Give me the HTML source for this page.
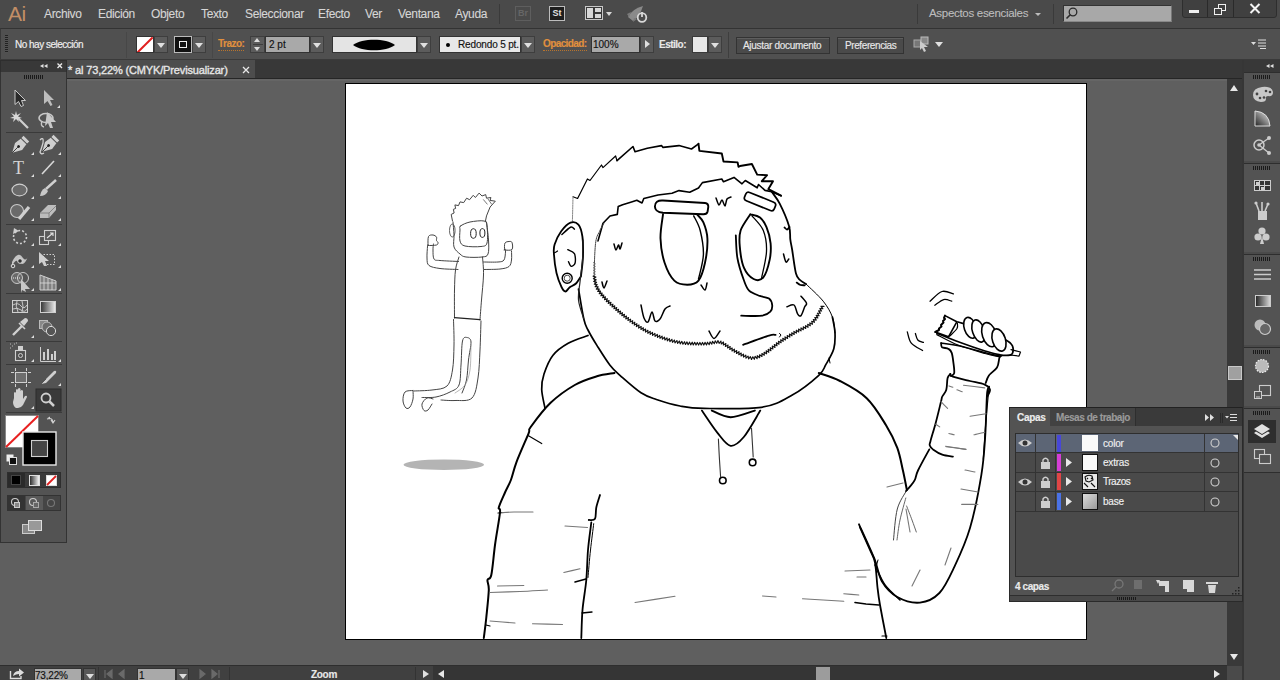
<!DOCTYPE html>
<html><head><meta charset="utf-8">
<style>
*{margin:0;padding:0;box-sizing:border-box}
html,body{width:1280px;height:680px;overflow:hidden;background:#5f5f5f;font-family:"Liberation Sans",sans-serif;position:relative}
.a{position:absolute}
svg{overflow:visible}
#menubar{left:0;top:0;width:1280px;height:28px;background:#4a4a4a}
.mi{position:absolute;top:7px;font-size:12px;letter-spacing:-0.35px;color:#d6d6d6;white-space:nowrap;-webkit-text-stroke:0.1px currentColor}
#ctrl{left:0;top:28px;width:1280px;height:32px;background:#505050;border-top:1px solid #333;border-bottom:1px solid #3a3a3a;border-left:1px solid #3a3a3a}
.lbl{position:absolute;font-size:10px;color:#e8e8e8;white-space:nowrap;-webkit-text-stroke:0.15px currentColor}
.or{color:#e0903e;border-bottom:1px dotted #b8742e;line-height:12px}
.fld{position:absolute;border:1px solid #333}
.dd{position:absolute;background:#5c5c5c;border:1px solid #3e3e3e}
.dd:after{content:"";position:absolute;left:50%;top:50%;margin-left:-4px;margin-top:-2px;border-left:4px solid transparent;border-right:4px solid transparent;border-top:5px solid #e0e0e0}
#tabbar{left:67px;top:60px;width:1177px;height:19px;background:#383838}
#tab{left:67px;top:60px;width:188px;height:19px;background:#4d4d4d}
#vscroll{left:1227px;top:79px;width:15px;height:587px;background:#393939}
#dock{left:1242px;top:60px;width:38px;height:620px;background:#4a4a4a;border-left:2px solid #363636}
#status{left:0;top:665px;width:1227px;height:15px;background:#404040;border-top:1px solid #2e2e2e}
#artboard{left:345px;top:83px;width:742px;height:557px;background:#fff;border:1px solid #000}
#tools{left:0;top:60px;width:67px;height:483px;background:#535353;border:1px solid #333}
#layers{left:1009px;top:407px;width:234px;height:195px;background:#535353;border:1px solid #2c2c2c}
</style></head><body>
<div id="menubar" class="a">
  <div class="a" style="left:8px;top:2px;font-size:21px;color:#c28e66;letter-spacing:-0.5px">Ai</div>
  <div class="mi" style="left:44px">Archivo</div>
  <div class="mi" style="left:98px">Edición</div>
  <div class="mi" style="left:151px">Objeto</div>
  <div class="mi" style="left:201px">Texto</div>
  <div class="mi" style="left:245px">Seleccionar</div>
  <div class="mi" style="left:318px">Efecto</div>
  <div class="mi" style="left:365px">Ver</div>
  <div class="mi" style="left:398px">Ventana</div>
  <div class="mi" style="left:455px">Ayuda</div>
  <div class="a" style="left:499px;top:4px;width:1px;height:20px;background:#3a3a3a"></div>
  <div class="a" style="left:515px;top:6px;width:16px;height:15px;border:1px solid #5e5e5e;color:#666;font-size:9px;font-weight:bold;text-align:center;line-height:13px">Br</div>
  <div class="a" style="left:549px;top:6px;width:16px;height:15px;border:1px solid #bdbdbd;background:#1e1e1e;color:#e0e0e0;font-size:9px;font-weight:bold;text-align:center;line-height:13px">St</div>
  <div class="a" style="left:585px;top:6px;width:18px;height:14px;border:1px solid #c8c8c8;background:#3a3a3a"></div>
  <div class="a" style="left:587px;top:8px;width:6px;height:10px;background:#d8d8d8"></div>
  <div class="a" style="left:595px;top:8px;width:6px;height:4px;background:#d8d8d8"></div>
  <div class="a" style="left:595px;top:14px;width:6px;height:4px;background:#d8d8d8"></div>
  <div class="a" style="left:606px;top:12px;border-left:3px solid transparent;border-right:3px solid transparent;border-top:4px solid #d8d8d8"></div>
  <svg class="a" style="left:624px;top:4px" width="26" height="20" viewBox="0 0 26 20"><path d="M4 13 Q8 5 19 2 Q16 12 9 17Z" fill="#8a8a8a"/><path d="M3 10 L7 8 L5 13Z M9 18 L10 14 L13 15Z" fill="#7a7a7a"/><circle cx="18" cy="13.5" r="4.3" fill="#4a4a4a" stroke="#d8d8d8" stroke-width="1.8"/><path d="M18 8 V13" stroke="#d8d8d8" stroke-width="1.8"/></svg>
  <div class="a" style="left:917px;top:4px;width:1px;height:20px;background:#3a3a3a"></div>
  <div class="mi" style="left:929px;top:7px;font-size:11.5px;letter-spacing:-0.3px;color:#bdbdbd">Aspectos esenciales</div>
  <div class="a" style="left:1035px;top:13px;border-left:3px solid transparent;border-right:3px solid transparent;border-top:3px solid #bdbdbd"></div>
  <div class="a" style="left:1053px;top:4px;width:1px;height:20px;background:#3a3a3a"></div>
  <div class="a" style="left:1063px;top:5px;width:109px;height:17px;background:#a8a8a8;border:1px solid #333;border-right-color:#777;border-bottom-color:#888"></div>
  <svg class="a" style="left:1065px;top:6px" width="14" height="14" viewBox="0 0 14 14"><circle cx="8" cy="6" r="3.8" fill="none" stroke="#2a2a2a" stroke-width="1.3"/><path d="M5.3 8.7 L1.5 12.5" stroke="#2a2a2a" stroke-width="1.6"/></svg>
  <div class="a" style="left:1182px;top:-1px;width:95px;height:19px;background:#404040;border:1px solid #2e2e2e;border-radius:0 0 3px 3px"></div>
  <div class="a" style="left:1207px;top:0;width:1px;height:17px;background:#2a2a2a"></div>
  <div class="a" style="left:1233px;top:0;width:1px;height:17px;background:#2a2a2a"></div>
  <div class="a" style="left:1189px;top:10px;width:10px;height:3px;background:#f0f0f0"></div>
  <div class="a" style="left:1218px;top:4px;width:8px;height:7px;border:1.5px solid #f0f0f0"></div>
  <div class="a" style="left:1214px;top:8px;width:8px;height:7px;border:1.5px solid #f0f0f0;background:#404040"></div>
  <svg class="a" style="left:1249px;top:3px" width="12" height="11" viewBox="0 0 12 11"><path d="M1.5 1 L10.5 10 M10.5 1 L1.5 10" stroke="#f4f4f4" stroke-width="2"/></svg>
</div>
<div id="ctrl" class="a">
  <div class="a" style="left:4px;top:6px;width:3px;height:18px;background:repeating-linear-gradient(#222 0 1px,#535353 1px 2px)"></div>
  <div class="lbl" style="left:14px;top:10px;font-size:10px;letter-spacing:-0.5px;color:#f0f0f0">No hay selección</div>
  <div class="a" style="left:125px;top:3px;width:1px;height:26px;background:#474747"></div>
  <div class="a" style="left:135px;top:7px;width:18px;height:17px;background:#fff;border:1px solid #333;overflow:hidden"><div class="a" style="left:-3px;top:7px;width:22px;height:2px;background:#e02020;transform:rotate(-45deg)"></div></div>
  <div class="dd" style="left:153px;top:7px;width:14px;height:17px"></div>
  <div class="a" style="left:173px;top:7px;width:18px;height:17px;background:#111;border:1px solid #bbb"><div class="a" style="left:4px;top:4px;width:8px;height:7px;border:1.5px solid #eee"></div></div>
  <div class="dd" style="left:191px;top:7px;width:14px;height:17px"></div>
  <div class="a" style="left:211px;top:3px;width:1px;height:26px;background:#474747"></div>
  <div class="lbl or" style="left:217px;top:9px;font-size:10px;letter-spacing:-0.5px;font-weight:bold">Trazo:</div>
  <div class="a" style="left:249px;top:7px;width:15px;height:17px;background:#5c5c5c;border:1px solid #3e3e3e"></div>
  <div class="a" style="left:253px;top:9px;border-left:3px solid transparent;border-right:3px solid transparent;border-bottom:4px solid #ddd"></div>
  <div class="a" style="left:253px;top:18px;border-left:3px solid transparent;border-right:3px solid transparent;border-top:4px solid #ddd"></div>
  <div class="a" style="left:252px;top:15px;width:10px;height:1px;background:#3e3e3e"></div>
  <div class="fld" style="left:264px;top:7px;width:45px;height:17px;background:#a9a9a9"></div>
  <div class="lbl" style="left:268px;top:10px;color:#111">2 pt</div>
  <div class="dd" style="left:309px;top:7px;width:14px;height:17px"></div>
  <div class="fld" style="left:331px;top:7px;width:85px;height:17px;background:#e4e4e4"></div>
  <svg class="a" style="left:351px;top:10px" width="44" height="12" viewBox="0 0 44 12"><path d="M1 6 C10 -1 34 -1 43 6 C34 13 10 13 1 6Z" fill="#000"/></svg>
  <div class="dd" style="left:416px;top:7px;width:14px;height:17px"></div>
  <div class="fld" style="left:438px;top:7px;width:82px;height:17px;background:#e8e8e8"></div>
  <div class="a" style="left:445px;top:14px;width:4px;height:4px;border-radius:50%;background:#000"></div>
  <div class="lbl" style="left:457px;top:10px;color:#111;letter-spacing:-0.15px">Redondo 5 pt.</div>
  <div class="dd" style="left:520px;top:7px;width:14px;height:17px"></div>
  <div class="lbl or" style="left:542px;top:9px;font-size:10px;letter-spacing:-0.6px;font-weight:bold">Opacidad:</div>
  <div class="fld" style="left:590px;top:7px;width:49px;height:17px;background:#a9a9a9"></div>
  <div class="lbl" style="left:592px;top:10px;color:#111">100%</div>
  <div class="a" style="left:639px;top:7px;width:14px;height:17px;background:#5c5c5c;border:1px solid #3e3e3e"></div>
  <div class="a" style="left:644px;top:11px;border-top:4px solid transparent;border-bottom:4px solid transparent;border-left:5px solid #e0e0e0"></div>
  <div class="lbl" style="left:658px;top:10px;font-weight:bold;letter-spacing:-0.5px;color:#e8e8e8">Estilo:</div>
  <div class="a" style="left:691px;top:7px;width:16px;height:17px;background:#e8e8e8;border:1px solid #3a3a3a"></div>
  <div class="dd" style="left:707px;top:7px;width:14px;height:17px"></div>
  <div class="a" style="left:727px;top:3px;width:1px;height:26px;background:#3e3e3e"></div>
  <div class="a" style="left:735px;top:8px;width:94px;height:17px;background:#4a4a4a;border:1px solid #333;box-shadow:inset 0 1px 0 #5e5e5e"></div>
  <div class="lbl" style="left:742px;top:11px;letter-spacing:-0.3px;color:#e8e8e8">Ajustar documento</div>
  <div class="a" style="left:836px;top:8px;width:67px;height:17px;background:#4a4a4a;border:1px solid #333;box-shadow:inset 0 1px 0 #5e5e5e"></div>
  <div class="lbl" style="left:844px;top:11px;letter-spacing:-0.4px;color:#e8e8e8">Preferencias</div>
  <svg class="a" style="left:912px;top:6px" width="18" height="18" viewBox="0 0 18 18"><rect x="1" y="5" width="7" height="7" fill="#777" stroke="#aaa"/><rect x="8" y="2" width="7" height="7" fill="#888" stroke="#bbb"/><path d="M7 6 L15 12 L11 12 L13 16 L11 17 L9 13 L7 15Z" fill="#ccc"/></svg>
  <div class="a" style="left:934px;top:13px;border-left:4px solid transparent;border-right:4px solid transparent;border-top:5px solid #e0e0e0"></div>
  <svg class="a" style="left:1250px;top:10px" width="16" height="10" viewBox="0 0 16 10"><path d="M0 3 L5 3 L2.5 6Z" fill="#ddd"/><path d="M7 1 H15 M7 4 H15 M7 7 H15 M9 9.5 H15" stroke="#ddd" stroke-width="1"/></svg>
</div>
<div id="tabbar" class="a"></div>
<div id="tab" class="a">
  <div class="lbl" style="left:1px;top:4px;font-size:11px;color:#e6e6e6;letter-spacing:-0.15px;-webkit-text-stroke:0.35px #e6e6e6">* al 73,22% (CMYK/Previsualizar)</div>
  <svg class="a" style="left:175px;top:6px" width="8" height="8" viewBox="0 0 8 8"><path d="M1 1 L7 7 M7 1 L1 7" stroke="#e8e8e8" stroke-width="1.3"/></svg>
</div>
<div class="a" style="left:67px;top:78px;width:1177px;height:1px;background:#262626"></div><div class="a" style="left:67px;top:79px;width:1160px;height:2px;background:#656565"></div>
<div id="artboard" class="a"></div>
<div id="vscroll" class="a">
  <div class="a" style="left:3px;top:6px;border-left:4.5px solid transparent;border-right:4.5px solid transparent;border-bottom:6px solid #e8e8e8"></div>
  <div class="a" style="left:0.5px;top:287px;width:14px;height:14px;background:#a0a0a0;border:1px solid #c8c8c8"></div>
  <div class="a" style="left:3px;top:575px;border-left:4.5px solid transparent;border-right:4.5px solid transparent;border-top:6px solid #e8e8e8"></div>
</div>
<div id="dock" class="a"></div>
<div id="status" class="a">
  <svg class="a" style="left:9px;top:1px" width="16" height="13" viewBox="0 0 16 13"><path d="M1.5 4 V11.5 H12 V9" fill="none" stroke="#ddd" stroke-width="1.4"/><path d="M4 9 Q5 4 10 4 V1.5 L15 5.5 L10 9.5 V7 Q7 7 4 9Z" fill="#ddd"/></svg>
  <div class="a" style="left:34px;top:2px;width:48px;height:14px;background:#a9a9a9;border:1px solid #333"></div>
  <div class="lbl" style="left:35px;top:4px;color:#111;letter-spacing:-0.2px">73,22%</div>
  <div class="a" style="left:83px;top:2px;width:13px;height:14px;background:#585858;border:1px solid #333"><div class="a" style="left:2px;top:5px;border-left:4px solid transparent;border-right:4px solid transparent;border-top:5px solid #ddd"></div></div>
  <div class="a" style="left:98px;top:1px;width:1px;height:14px;background:#333"></div>
  <svg class="a" style="left:104px;top:3px" width="30" height="10" viewBox="0 0 30 10"><path d="M1 1 V9 M8 1 L3 5 L8 9Z M20 1 L15 5 L20 9Z" fill="#6a6a6a" stroke="#6a6a6a" stroke-width="1.2"/></svg>
  <div class="a" style="left:137px;top:2px;width:39px;height:14px;background:#a9a9a9;border:1px solid #333"></div>
  <div class="lbl" style="left:139px;top:4px;color:#111">1</div>
  <div class="a" style="left:176px;top:2px;width:13px;height:14px;background:#585858;border:1px solid #333"><div class="a" style="left:2px;top:5px;border-left:4px solid transparent;border-right:4px solid transparent;border-top:5px solid #ddd"></div></div>
  <svg class="a" style="left:197px;top:3px" width="30" height="10" viewBox="0 0 30 10"><path d="M3 1 L8 5 L3 9Z M15 1 L20 5 L15 9Z M22 1 V9" fill="#6a6a6a" stroke="#6a6a6a" stroke-width="1.2"/></svg>
  <div class="a" style="left:229px;top:1px;width:1px;height:14px;background:#333"></div>
  <div class="lbl" style="left:311px;top:3px;color:#e8e8e8;font-weight:bold;letter-spacing:-0.3px">Zoom</div>
  <div class="a" style="left:415px;top:1px;width:1px;height:14px;background:#333"></div>
  <div class="a" style="left:423px;top:4px;border-top:4.5px solid transparent;border-bottom:4.5px solid transparent;border-left:6px solid #e0e0e0"></div>
  <div class="a" style="left:433px;top:0;width:794px;height:15px;background:#353535"></div>
  <div class="a" style="left:438px;top:4px;border-top:4.5px solid transparent;border-bottom:4.5px solid transparent;border-right:6px solid #e8e8e8"></div>
  <div class="a" style="left:816px;top:1px;width:14px;height:14px;background:#9c9c9c"></div>
  <div class="a" style="left:1214px;top:4px;border-top:4.5px solid transparent;border-bottom:4.5px solid transparent;border-left:6px solid #e8e8e8"></div>
</div>
<div class="a" style="left:1227px;top:666px;width:15px;height:14px;background:#4a4a4a"></div>
<div id="tools" class="a"></div>

<svg class="a" style="left:346px;top:84px" width="740" height="554" viewBox="346 84 740 554">
<ellipse cx="443.8" cy="464.7" rx="40.3" ry="5.3" fill="#b4b4b4"/>
<path d="M452.5 221 L451.2 214.4 L454.1 213 L453.4 209.3 L455.6 208.5 L454.9 204.9 L458.5 205.6 L460 201.9 L463.7 202.6 L466.6 198.2 L469.6 199.7 L473.2 195.3 L475.4 197.5 L479.1 193.1 L482 196 L485.7 194.6 L486.5 198.2 L490.9 197.5 L490.1 200.4 L495.3 201.2 L490.1 207 L486.5 215.9 L485.3 221.8" fill="none" stroke="#444" stroke-width="1.0" stroke-linecap="round" stroke-linejoin="round"/>
<path d="M483.5 199.7 L487.2 204.1" fill="none" stroke="#555" stroke-width="0.8" stroke-linecap="round" stroke-linejoin="round"/>
<path d="M488 199 L491.5 204" fill="none" stroke="#555" stroke-width="0.8" stroke-linecap="round" stroke-linejoin="round"/>
<ellipse cx="452.3" cy="230.5" rx="2.8" ry="6.5" fill="none" stroke="#555" stroke-width="0.9"/>
<path d="M453 222 C453.2 224.2 453.8 230.8 454 235 C454.2 239.2 453 243.8 454 247 C455 250.2 458 252.3 460 254 C462 255.7 462.3 256.5 466 257 C469.7 257.5 478.3 257.5 482 257 C485.7 256.5 486.9 256.8 488 254 C489.1 251.2 488.8 245.3 488.5 240 C488.2 234.7 486.8 225 486.5 222" fill="none" stroke="#444" stroke-width="1.0" stroke-linecap="round" stroke-linejoin="round"/>
<path d="M460.5 226 C462.2 224.7 466.1 222.8 470 222 C473.9 221.2 481.2 220.3 484 221 C486.8 221.7 486.5 222.3 487 226 C487.5 229.7 488 239.6 487 243 C486 246.4 484.7 246 481 246.5 C477.3 247 468.5 246.9 465 246 C461.5 245.1 460.8 243.7 460 241 C459.2 238.3 459.9 232.5 460 230 C460.1 227.5 458.8 227.3 460.5 226Z" fill="none" stroke="#444" stroke-width="1.0" stroke-linecap="round" stroke-linejoin="round"/>
<ellipse cx="473.4" cy="233.5" rx="2.8" ry="4.8" fill="none" stroke="#222" stroke-width="1"/>
<ellipse cx="482.4" cy="233" rx="2.5" ry="4.4" fill="none" stroke="#222" stroke-width="1"/>
<path d="M459 257 C458.4 259.2 456.2 264.5 455.5 270 C454.8 275.5 454.7 282 454.5 290 C454.3 298 454.5 313.3 454.5 318" fill="none" stroke="#444" stroke-width="1.0" stroke-linecap="round" stroke-linejoin="round"/>
<path d="M482.5 257 C482.7 260 483.7 267.8 483.5 275 C483.3 282.2 482.1 292.5 481.5 300 C480.9 307.5 480.2 316.7 480 320" fill="none" stroke="#444" stroke-width="1.0" stroke-linecap="round" stroke-linejoin="round"/>
<path d="M454.5 317.6 L480 319.7" fill="none" stroke="#222" stroke-width="1.3" stroke-linecap="round" stroke-linejoin="round"/>
<path d="M458.5 261.5 C455.4 261.3 444.1 260.9 440 260.5 C435.9 260.1 435.2 260.8 434 259 C432.8 257.2 433.1 252.5 433 250 C432.9 247.5 433.4 245 433.5 244" fill="none" stroke="#444" stroke-width="1.0" stroke-linecap="round" stroke-linejoin="round"/>
<path d="M427.5 246.5 C427.4 248.4 426.8 254.8 427 258 C427.2 261.2 426.8 263.8 429 265.5 C431.2 267.2 435.2 267.8 440 268.5 C444.8 269.2 455 269.3 458 269.5" fill="none" stroke="#444" stroke-width="1.0" stroke-linecap="round" stroke-linejoin="round"/>
<path d="M428 245 C428.1 243.5 427.7 238.2 428.5 236.5 C429.3 234.8 431.7 234.9 433 235 C434.3 235.1 435.9 236.1 436.5 237 C437.1 237.9 436.2 239.6 436.5 240.5 C436.8 241.4 438 241.8 438 242.5 C438 243.2 438.2 244.5 436.5 245 C434.8 245.5 429.4 245.5 428 245.5 C426.6 245.5 427.9 246.5 428 245Z" fill="none" stroke="#444" stroke-width="1.0" stroke-linecap="round" stroke-linejoin="round"/>
<path d="M483.5 262 C485.9 262 494.6 262.3 498 262 C501.4 261.7 502.8 261.7 504 260 C505.2 258.3 505.3 253.8 505.5 252 C505.7 250.2 505.1 249.5 505 249" fill="none" stroke="#444" stroke-width="1.0" stroke-linecap="round" stroke-linejoin="round"/>
<path d="M511.5 251 C511.5 252.5 511.9 257.4 511.5 260 C511.1 262.6 510.9 265 509 266.5 C507.1 268 504.2 268.5 500 269 C495.8 269.5 486.7 269.4 484 269.5" fill="none" stroke="#444" stroke-width="1.0" stroke-linecap="round" stroke-linejoin="round"/>
<path d="M504.5 249.5 C504.6 248.3 504.2 244.3 505 243 C505.8 241.7 507.8 241.6 509 241.5 C510.2 241.4 511.5 241.2 512 242.5 C512.5 243.8 513.2 248.2 512 249.5 C510.8 250.8 505.8 250 504.5 250 C503.2 250 504.4 250.7 504.5 249.5Z" fill="none" stroke="#444" stroke-width="1.0" stroke-linecap="round" stroke-linejoin="round"/>
<path d="M453.5 319.5 C453.6 323.8 454.2 336.6 454 345 C453.8 353.4 453.7 363.2 452.5 370 C451.3 376.8 450.4 382.7 447 386 C443.6 389.3 437.5 389.2 432 390 C426.5 390.8 417 390.8 414 391" fill="none" stroke="#444" stroke-width="1.0" stroke-linecap="round" stroke-linejoin="round"/>
<path d="M481 321 C480.8 325.8 480.5 340.5 480 350 C479.5 359.5 479.3 370 478 378 C476.7 386 475.8 394.2 472 398 C468.2 401.8 460.2 400.2 455 400.5 C449.8 400.8 443.3 400.1 441 400" fill="none" stroke="#444" stroke-width="1.0" stroke-linecap="round" stroke-linejoin="round"/>
<path d="M462 393 C462.8 390.8 465.4 385.5 466.5 380 C467.6 374.5 467.8 366.3 468.5 360 C469.2 353.7 471.2 345.8 471 342 C470.8 338.2 468.4 337.7 467 337.5 C465.6 337.3 463.5 336.4 462.5 341 C461.5 345.6 461.6 357.7 461 365 C460.4 372.3 460.8 380.5 459 385 C457.2 389.5 453.8 390 450 392 C446.2 394 440.7 396.1 436 397 C431.3 397.9 424.3 397.4 422 397.5" fill="none" stroke="#444" stroke-width="1.0" stroke-linecap="round" stroke-linejoin="round"/>
<path d="M413 390.5 C411.7 390.8 406.7 390.2 405 392 C403.3 393.8 402.8 398.3 403 401 C403.2 403.7 404.8 407 406 408 C407.2 409 408.8 408.5 410 407 C411.2 405.5 412.5 401.7 413 399 C413.5 396.3 413 392.3 413 391" fill="none" stroke="#444" stroke-width="1.0" stroke-linecap="round" stroke-linejoin="round"/>
<path d="M433 399 C432 398.8 428.8 397.2 427 398 C425.2 398.8 422.5 401.9 422 404 C421.5 406.1 423 409.5 424 410.5 C425 411.5 426.7 411.1 428 410 C429.3 408.9 431.3 405 432 404" fill="none" stroke="#444" stroke-width="1.0" stroke-linecap="round" stroke-linejoin="round"/>
<path d="M471 345 C470.8 349.2 471 363.3 470 370 C469 376.7 467.5 381.2 465 385 C462.5 388.8 456.7 391.7 455 393" fill="none" stroke="#999" stroke-width="0.7" stroke-linecap="round" stroke-linejoin="round"/>
<path d="M573 196.8 L577.6 198.5 L587.4 179 L590 180.5 L601.5 165 L603 167.6 L615.6 156 L617 160.6" fill="none" stroke="#000" stroke-width="1.2" stroke-linecap="round" stroke-linejoin="round"/>
<path d="M617 160.6 L633 146.5 L635 151.8 L647.3 148.2 L661.5 145.6 L663 147.4 L679 145.6 L691.5 149 L698.5 143.8" fill="none" stroke="#000" stroke-width="1.6" stroke-linecap="round" stroke-linejoin="round"/>
<path d="M698.5 143.8 L699.4 150.9 L721.8 153.5 L723.5 161.5 L737.6 162.4 L738.5 166.8 L740 166 L751.9 164 L757.2 174.6 L767.1 175.2 L761.8 181.2 L773 181.2 L768.4 189.1 L781 195.7" fill="none" stroke="#000" stroke-width="1.9" stroke-linecap="round" stroke-linejoin="round"/>
<path d="M572.4 221.5 L573 196.8" fill="none" stroke="#777" stroke-width="0.9" stroke-linecap="round" stroke-linejoin="round" stroke-dasharray="1.5 1"/>
<path d="M598 240.9 L603 223.2 L610 216 L617.3 214.4 L618.2 206.5 L622.6 204.7 L631.5 202 L636.8 200.3 L642 203 L643.8 198.5 L658 195 L672 193.2 L679 190.6 L689.7 192.3 L698.5 188 L702.4 182.6 L721.8 179 L723.5 181.8 L734 177.4 L742 183.8 L745.3 180.5 L757.2 187.8 L758.5 184.5 L765 190.4 L771.7 191.7 L781 195.7" fill="none" stroke="#000" stroke-width="1.6" stroke-linecap="round" stroke-linejoin="round"/>
<path d="M606.2 300 C604.7 297.8 599 290.8 597 286.8 C595 282.8 594.5 283.5 594.3 276.2 C594.1 268.9 594.7 250.5 595.6 243 C596.5 235.5 598.2 234.5 599.6 231.2 C601 227.9 603.3 224.4 604 223" fill="none" stroke="#444" stroke-width="1.0" stroke-linecap="round" stroke-linejoin="round" stroke-dasharray="3 1"/>
<path d="M771.7 191.7 C773 193.7 776.8 198 779.7 203.7 C782.6 209.4 787.2 220.1 789 226.1 C790.8 232.1 789.8 235.4 790.3 239.4 C790.8 243.4 791.3 244.4 792.2 250 C793.1 255.6 794.6 268.2 795.9 273.2 C797.2 278.2 798.3 278.2 800 280 C801.7 281.8 805 283.3 806 284" fill="none" stroke="#000" stroke-width="1.8" stroke-linecap="round" stroke-linejoin="round"/>
<path d="M796.7 282.6 C797.3 283 799.2 284.6 800.5 285 C801.8 285.4 804 285.2 804.7 285.3" fill="none" stroke="#000" stroke-width="1.8" stroke-linecap="round" stroke-linejoin="round"/>
<path d="M806 284 C808.9 286.9 818.8 295.7 823.2 301.2 C827.6 306.7 830.4 311.7 832.4 317 C834.4 322.3 834.6 330.2 835 332.9" fill="none" stroke="#000" stroke-width="1.0" stroke-linecap="round" stroke-linejoin="round"/>
<path d="M832.4 317 C832.8 319.6 834.8 327.6 835 332.9 C835.2 338.2 835.3 343.5 833.8 348.8 C832.3 354.1 828.3 360.3 825.8 364.7 C823.3 369.1 824.4 370.2 818.8 375.3 C813.2 380.4 801.9 389.7 792.3 395 C782.7 400.3 776.1 405.1 761.4 407.3 C746.7 409.5 717.6 408.6 704 408.4 C690.4 408.2 687.9 407.5 680 406 C672.1 404.5 662.9 401.7 656.4 399.5 C649.9 397.3 646.9 396.7 641 392.8 C635.1 388.9 626.2 380.9 621 376.3 C615.8 371.7 614 370.5 610 365.3 C606 360.1 600.6 351.3 596.9 345.4 C593.2 339.5 590.2 334.4 588 330 C585.8 325.6 585.4 325.8 583.8 319 C582.2 312.2 579.4 294 578.5 289" fill="none" stroke="#000" stroke-width="1.7" stroke-linecap="round" stroke-linejoin="round"/>
<path d="M784.5 227.5 C784.9 227.8 786.2 229.6 787 229.5 C787.8 229.4 789.1 227.4 789.5 227" fill="none" stroke="#000" stroke-width="1.8" stroke-linecap="round" stroke-linejoin="round"/>
<path d="M581 276.2 C580.2 277.4 577.9 281.6 576 283.5 C574.1 285.4 571.2 286.2 569.5 287.5 C567.8 288.8 566.8 291.6 565.5 291.5 C564.2 291.4 563 290.1 561.5 287 C560 283.9 557.8 278.6 556.5 273 C555.2 267.4 554.2 258.5 553.9 253.7 C553.6 248.9 553.4 248.2 554.6 244.4 C555.8 240.7 558.6 234.8 561.2 231.2 C563.9 227.6 567.6 223.7 570.5 222.6 C573.4 221.5 576.4 222.3 578.4 224.6 C580.4 226.9 581.6 231.2 582.4 236.5 C583.2 241.8 583.2 249.8 583 256.4 C582.8 263 581.3 272.9 581 276.2" fill="none" stroke="#000" stroke-width="1.8" stroke-linecap="round" stroke-linejoin="round"/>
<path d="M561.9 234.5 C563.3 233.3 568.4 228.1 570.5 227.2 C572.6 226.3 573.8 228.9 574.4 229.2" fill="none" stroke="#000" stroke-width="1.5" stroke-linecap="round" stroke-linejoin="round"/>
<path d="M567.8 249.7 C568.9 250.4 573.2 251.5 574.4 253.7 C575.6 255.9 575.6 260.9 575.1 263 C574.6 265.1 572.2 266.5 571.1 266.3 C570 266.1 568.9 262.5 568.5 261.7" fill="none" stroke="#000" stroke-width="1.4" stroke-linecap="round" stroke-linejoin="round"/>
<path d="M553.9 253 C554.2 252.8 555.4 252.3 556 252 C556.6 251.7 557.2 251.2 557.5 251" fill="none" stroke="#000" stroke-width="1.2" stroke-linecap="round" stroke-linejoin="round"/>
<circle cx="567.2" cy="278.2" r="5" fill="none" stroke="#000" stroke-width="1.4"/><circle cx="567.2" cy="278.2" r="3" fill="none" stroke="#333" stroke-width="0.9"/>
<path d="M583 240 C582.9 243.3 583 253 582.5 260 C582 267 580.7 275.3 580 282 C579.3 288.7 577.9 293.8 578.5 300 C579.1 306.2 582.9 315.8 583.8 319" fill="none" stroke="#222" stroke-width="1.2" stroke-linecap="round" stroke-linejoin="round"/>
<path d="M663 214.3 C662.6 218.3 660.2 230.4 660.5 238.5 C660.8 246.6 662.3 255.8 664.6 262.8 C666.9 269.8 670.5 277 674.3 280.6 C678.1 284.2 683.2 284.7 687.2 284.7 C691.2 284.7 695.5 284.2 698.5 280.6 C701.5 277 703.5 269.8 705 262.8 C706.5 255.8 707.7 245.2 707.4 238.5 C707.1 231.8 705.1 226.4 703.4 222.4 C701.7 218.4 698.1 215.7 697 214.3" fill="none" stroke="#000" stroke-width="1.9" stroke-linecap="round" stroke-linejoin="round"/>
<path d="M693.7 215.9 C694.8 218.3 698.6 224 700.2 230.5 C701.8 237 703.7 246.6 703.4 254.7 C703.1 262.8 699.3 274.9 698.5 279" fill="none" stroke="#000" stroke-width="1.4" stroke-linecap="round" stroke-linejoin="round"/>
<path d="M750.3 214.3 C748.7 217 742.4 225.1 740.6 230.5 C738.9 235.9 739.2 240.4 739.8 246.6 C740.3 252.8 741.6 262.3 743.9 267.7 C746.2 273.1 750.4 277.4 753.6 279 C756.8 280.6 760.6 280.6 763.3 277.4 C766 274.2 768.5 265.3 769.7 259.6 C770.9 253.9 771.1 248.8 770.6 243.4 C770.1 238 768.3 231.5 766.5 227.2 C764.7 222.9 762.7 219.7 760 217.5 C757.3 215.3 751.9 214.8 750.3 214.3" fill="none" stroke="#000" stroke-width="1.9" stroke-linecap="round" stroke-linejoin="round"/>
<path d="M752 215.9 C753.9 218.3 760.9 224.6 763.3 230.5 C765.7 236.4 766.8 243.7 766.5 251.5 C766.2 259.3 762.5 273.1 761.7 277.4" fill="none" stroke="#000" stroke-width="1.3" stroke-linecap="round" stroke-linejoin="round"/>
<path d="M663 200.5 L705 203 Q708.5 203.5 708.3 207 L707.6 211.5 Q707 214.5 703 214.3 L663 212.7 Q655 212 654.9 206.5 Q655 200 663 200.5Z" fill="#fff" stroke="#000" stroke-width="1.9"/>
<rect x="744" y="197" width="32" height="9" rx="3" fill="#fff" stroke="#000" stroke-width="1.7" transform="rotate(22 760 201.5)"/>
<path d="M735.8 235.3 C736.1 239.1 736.1 250.6 737.4 258 C738.7 265.4 741.8 274.6 743.8 280 C745.8 285.4 746.5 288 749.1 290.6 C751.8 293.2 756.4 294.6 759.7 295.9 C763 297.2 766.9 297 769 298.5 C771.1 300 772 302.9 772.2 305.1 C772.4 307.3 771.9 309.9 770.3 311.7 C768.6 313.5 767.1 315 762.3 315.7 C757.4 316.4 744.7 315.7 741.2 315.7" fill="none" stroke="#000" stroke-width="1.8" stroke-linecap="round" stroke-linejoin="round"/>
<path d="M743.1 344.8 C747.4 343.3 763.6 337.2 769 335.6 C774.4 334 774.5 335 775.6 334.9" fill="none" stroke="#000" stroke-width="1.8" stroke-linecap="round" stroke-linejoin="round"/>
<path d="M779.5 333.4 L781 335 L779.5 337" fill="none" stroke="#000" stroke-width="1" stroke-linecap="round" stroke-linejoin="round"/>
<path d="M593.4 262.6 L595.4 263.9 L593.4 265.2 L595.4 266.5 L593.4 267.8 L595.4 269.1 L593.4 270.4 L595.4 271.7 L593.4 273 L595.4 274.3 L593.4 275.6" fill="none" stroke="#666" stroke-width="0.9" stroke-linecap="round" stroke-linejoin="round"/>
<path d="M593.1 276.2 L595.9 277.1 L593.4 278.7 L596.2 279.7 L593.7 281.4 L596.6 282.2 L594.3 284.1 L597.2 284.5 L595.2 286.7 L598.2 286.8 L596.3 289.1 L599.3 289 L597.7 291.5 L600.6 291.1 L599.2 293.7 L602.2 293.1 L600.9 295.8 L603.8 295 L602.7 297.8 L605.5 296.9 L604.5 299.7 L607.3 298.7 L606.3 301.6 L609.1 300.6 L608.2 303.4 L611 302.4 L610.1 305.2 L612.9 304.2 L612 307 L614.8 305.9 L613.9 308.8 L616.7 307.6 L615.8 310.5 L618.6 309.4 L617.8 312.2 L620.6 311.1 L619.8 314 L622.5 312.7 L621.8 315.6 L624.5 314.4 L623.8 317.3 L626.5 316 L625.8 318.9 L628.5 317.6 L627.9 320.5 L630.6 319.2 L630 322.1 L632.7 320.7 L632.2 323.7 L634.8 322.2 L634.3 325.1 L636.9 323.7 L636.4 326.6 L639 325.1 L638.6 328.1 L641.2 326.5 L640.9 329.5 L643.4 327.8 L643.1 330.8 L645.6 329.1 L645.5 332.1 L647.9 330.3 L647.8 333.3 L650.2 331.4 L650.2 334.4 L652.5 332.4 L652.6 335.4 L654.9 333.4 L655.1 336.4 L657.3 334.4 L657.5 337.4 L659.7 335.3 L660 338.3 L662.1 336.2 L662.4 339.2 L664.5 337.1 L664.9 340 L667 337.9 L667.4 340.8 L669.4 338.6 L669.9 341.6 L671.9 339.3 L672.5 342.3 L674.4 340 L675 342.9 L676.9 340.5 L677.6 343.4 L679.4 341 L680.2 343.9 L681.9 341.4 L682.9 344.2 L684.5 341.7 L685.5 344.5 L687 341.9 L688.1 344.7 L689.6 342.1 L690.7 344.9 L692.2 342.2 L693.3 345 L694.7 342.3 L696 345.1 L697.3 342.4 L698.6 345.1 L699.9 342.4 L701.2 345.1 L702.5 342.4 L703.8 345.1 L705 342.4 L706.5 345 L707.5 342.2 L709.2 344.7 L710 341.8 L711.8 344.2 L712.5 341.3 L714.3 343.7 L715.2 340.8 L716.7 343.3 L718 340.6 L719.1 343.4 L720.9 341 L721.3 344 L723.5 342 L723.4 345 L725.9 343.5 L725.4 346.4 L728.1 345 L727.5 348 L730.2 346.6 L729.7 349.5 L732.2 348 L732 351 L734.4 349.2 L734.3 352.2 L736.7 350.5 L736.5 353.5 L739 351.7 L738.8 354.7 L741.2 353 L741.1 356 L743.5 354.1 L743.5 357.1 L745.8 355.2 L746 358.2 L748.1 356.1 L748.6 359 L750.4 356.6 L751.5 359.5 L752.8 356.8 L754.3 359.3 L755.1 356.4 L757.1 358.7 L757.3 355.7 L759.6 357.7 L759.6 354.7 L762 356.5 L761.9 353.5 L764.3 355.2 L764.1 352.2 L766.6 353.8 L766.2 350.8 L768.8 352.3 L768.2 349.3 L770.9 350.7 L770.2 347.7 L772.9 349 L772.3 346.1 L775 347.4 L774.3 344.5 L777 345.8 L776.4 342.8 L779 344.2 L778.5 341.3 L781.1 342.7 L780.7 339.8 L783.2 341.3 L782.8 338.3 L785.4 339.9 L785 336.9 L787.6 338.5 L787.2 335.5 L789.8 337.1 L789.5 334.1 L792 335.8 L791.7 332.8 L794.2 334.4 L793.9 331.4 L796.4 333.1 L796.3 330.2 L798.7 332 L798.6 329 L801 330.9 L801 327.9 L803.3 329.7 L803.3 326.7 L805.7 328.5 L805.6 325.6 L808 327.3 L807.7 324.3 L810.3 325.8 L809.8 322.9 L812.5 324.2 L811.7 321.3 L814.5 322.3 L813.3 319.5 L816.2 320.1 L814.8 317.5 L817.8 317.9 L816.2 315.4 L819.1 315.7 L817.4 313.2 L820.4 313.3 L818.6 310.9 L821.6 311 L819.8 308.6 L822.8 308.7 L821 306.3 L824 306.4" fill="none" stroke="#111" stroke-width="1.15" stroke-linecap="round" stroke-linejoin="round"/>
<path d="M614 244 C614.3 245 615.2 249.8 616 250 C616.8 250.2 617.8 245.2 618.5 245 C619.2 244.8 619.4 249.3 620 249 C620.6 248.7 621.7 244 622 243" fill="none" stroke="#000" stroke-width="1.5" stroke-linecap="round" stroke-linejoin="round"/>
<path d="M602 282 C602.3 283 603.2 288.2 604 288 C604.8 287.8 606.5 282.2 607 281" fill="none" stroke="#000" stroke-width="1.5" stroke-linecap="round" stroke-linejoin="round"/>
<path d="M641 305 C641.5 307.2 642.8 315.2 644 318 C645.2 320.8 646.7 323 648 322 C649.3 321 650.8 312.2 652 312 C653.2 311.8 653.7 319.8 655 321 C656.3 322.2 658.3 321 660 319 C661.7 317 663.3 311.2 665 309 C666.7 306.8 669.2 306.5 670 306" fill="none" stroke="#000" stroke-width="1.5" stroke-linecap="round" stroke-linejoin="round"/>
<path d="M709 331 C709.8 332.2 712.2 338.5 714 338.5 C715.8 338.5 719 332.2 720 331" fill="none" stroke="#000" stroke-width="1.5" stroke-linecap="round" stroke-linejoin="round"/>
<path d="M783.5 254 C783.9 255.3 785.1 261.2 786 262 C786.9 262.8 788.3 259.5 788.8 259" fill="none" stroke="#000" stroke-width="1.5" stroke-linecap="round" stroke-linejoin="round"/>
<path d="M787 306.8 C788.2 306.5 792.2 303.8 794 305 C795.8 306.2 796.4 312 797.6 313.8 C798.8 315.6 799.8 316.8 801 315.6 C802.2 314.4 803.8 308.9 804.7 306.8 C805.6 304.7 807.1 305 806.5 303.2 C805.9 301.4 801.9 297.4 801 296.2" fill="none" stroke="#000" stroke-width="1.5" stroke-linecap="round" stroke-linejoin="round"/>
<path d="M716 198 C716.5 199.2 718 204.7 719 205 C720 205.3 721 199.8 722 200 C723 200.2 724.2 206.2 725 206 C725.8 205.8 726 200.5 727 199 C728 197.5 730.3 197.3 731 197" fill="none" stroke="#000" stroke-width="1.5" stroke-linecap="round" stroke-linejoin="round"/>
<path d="M701 285 C701.7 285.8 704 290.3 705 290 C706 289.7 706.7 284.2 707 283" fill="none" stroke="#000" stroke-width="1.5" stroke-linecap="round" stroke-linejoin="round"/>
<path d="M588 335.5 C584.7 336.8 574.1 339.9 568.2 343.2 C562.3 346.5 556.8 350.3 552.8 355.4 C548.8 360.5 545.9 368.3 544 374 C542.1 379.7 541.5 383.8 541.7 389.5 C541.9 395.2 544.5 405.2 545 408.3" fill="none" stroke="#000" stroke-width="1.7" stroke-linecap="round" stroke-linejoin="round"/>
<path d="M614.5 373 C611.6 373.6 603.5 374.3 596.9 376.3 C590.3 378.3 582.5 380.6 574.8 385 C567.1 389.4 558 395.8 550.6 402.8 C543.2 409.8 534.4 421.9 530.7 427 C527 432.1 530.9 427.7 528.5 433.6 C526.1 439.5 519.3 454.6 516.4 462.3 C513.5 470 512.8 475 510.9 480 C509 485 507 487.9 505 492.5 C503 497.1 499.6 504.2 498.8 507.5 C498 510.8 500.6 506.2 500 512.5 C499.4 518.8 496.4 534.6 495 545 C493.6 555.4 492.6 569.2 491.3 575 C490.1 580.8 487.9 577.5 487.5 580 C487.1 582.5 489 583.8 488.8 590 C488.6 596.2 487.1 609.5 486.3 617.5 C485.5 625.5 484.2 634.6 483.8 638" fill="none" stroke="#000" stroke-width="2.0" stroke-linecap="round" stroke-linejoin="round"/>
<path d="M528.5 435.8 L541.7 443.6" fill="none" stroke="#000" stroke-width="1.2" stroke-linecap="round" stroke-linejoin="round"/>
<path d="M701.9 410.6 C704.5 414.3 712.5 426.7 717.3 432.6 C722.1 438.5 726.2 445.1 730.6 445.8 C735 446.5 738.8 442.9 743.8 437 C748.8 431.1 757.5 415 760.3 410.6" fill="none" stroke="#000" stroke-width="1.8" stroke-linecap="round" stroke-linejoin="round"/>
<path d="M711.8 410.6 C714.9 411.7 723.4 417.2 730.6 417.2 C737.8 417.2 750.8 411.7 754.8 410.6" fill="none" stroke="#000" stroke-width="2.0" stroke-linecap="round" stroke-linejoin="round"/>
<path d="M718.4 439 C718.6 442.5 719.1 453.7 719.5 460 C719.9 466.3 720.4 473.9 720.6 476.7" fill="none" stroke="#333" stroke-width="1.1" stroke-linecap="round" stroke-linejoin="round"/>
<path d="M751.5 428.2 C751.7 431 752.2 440.2 752.5 445 C752.8 449.8 753.1 455 753.2 457" fill="none" stroke="#333" stroke-width="1.1" stroke-linecap="round" stroke-linejoin="round"/>
<circle cx="722.8" cy="480.5" r="3.3" fill="#fff" stroke="#000" stroke-width="1.6"/><circle cx="752.6" cy="462.4" r="3.3" fill="#fff" stroke="#000" stroke-width="1.6"/>
<path d="M600 495 C599.4 497.1 597.1 503.5 596.3 507.5 C595.5 511.5 596.2 516.7 595 518.8 C593.8 520.9 589.8 519.8 588.8 520" fill="none" stroke="#000" stroke-width="1.8" stroke-linecap="round" stroke-linejoin="round"/>
<path d="M591.3 522.5 C590.8 527.1 588.8 540.4 588 550 C587.2 559.6 587.2 570 586.3 580 C585.4 590 583.3 600.3 582.5 610 C581.7 619.7 581.5 633.3 581.3 638" fill="none" stroke="#000" stroke-width="1.8" stroke-linecap="round" stroke-linejoin="round"/>
<path d="M593.7 523.7 C593.2 528.1 591.5 541 590.5 550 C589.5 559 588.4 572.9 588 577.5" fill="none" stroke="#000" stroke-width="1.0" stroke-linecap="round" stroke-linejoin="round"/>
<path d="M575 582 L586 579" fill="none" stroke="#000" stroke-width="1.5" stroke-linecap="round" stroke-linejoin="round"/>
<path d="M582 613 L592 612" fill="none" stroke="#000" stroke-width="1.3" stroke-linecap="round" stroke-linejoin="round"/>
<path d="M498 513 L505 512.5" fill="none" stroke="#000" stroke-width="1.2" stroke-linecap="round" stroke-linejoin="round"/>
<path d="M486 625 L490 626" fill="none" stroke="#000" stroke-width="1.2" stroke-linecap="round" stroke-linejoin="round"/>
<path d="M818.8 373 C822.3 374.3 832 376.8 840 381 C848 385.2 859.1 390.9 866.7 398.2 C874.4 405.5 880.8 416.7 885.9 425 C891 433.3 894.4 440.3 897.3 447.9 C900.1 455.5 901.4 463.8 903 470.8 C904.6 477.8 906.2 486.8 906.9 490" fill="none" stroke="#000" stroke-width="2.0" stroke-linecap="round" stroke-linejoin="round"/>
<path d="M860 527.5 C861.7 531.2 867.5 544.2 870 550 C872.5 555.8 873.8 556.2 875 562.5 C876.2 568.8 876.7 580.4 877.5 587.5 C878.3 594.6 878.5 596.6 880 605 C881.5 613.4 885.2 632.5 886.3 638" fill="none" stroke="#000" stroke-width="1.8" stroke-linecap="round" stroke-linejoin="round"/>
<path d="M875 565 C876.7 568.3 880.8 579.2 885 585 C889.2 590.8 897.5 597.5 900 600" fill="none" stroke="#000" stroke-width="1.6" stroke-linecap="round" stroke-linejoin="round"/>
<path d="M855 602.5 L866 604 L878.8 605" fill="none" stroke="#000" stroke-width="1.6" stroke-linecap="round" stroke-linejoin="round"/>
<path d="M829 358 L830 363" fill="none" stroke="#000" stroke-width="1" stroke-linecap="round" stroke-linejoin="round"/>
<path d="M878 560 L876 567" fill="none" stroke="#000" stroke-width="1" stroke-linecap="round" stroke-linejoin="round"/>
<path d="M882 636 L887 636" fill="none" stroke="#000" stroke-width="1.2" stroke-linecap="round" stroke-linejoin="round"/>
<path d="M906.9 490 C905.3 493.2 899.5 500.7 897.3 509 C895.1 517.3 894.1 534.8 893.5 540" fill="none" stroke="#444" stroke-width="1.0" stroke-linecap="round" stroke-linejoin="round"/>
<path d="M859 524.3 C861.6 530 870.6 549.2 874.4 558.7 C878.2 568.2 878.2 575.2 882 581.6 C885.8 588 891 593.5 897.3 597 C903.6 600.5 913 603.3 920 602.6 C927 601.9 933.6 599 939.4 593 C945.2 587 949.5 577.1 954.6 566.3 C959.7 555.5 965.5 543.3 970 528 C974.5 512.7 978.9 489.9 981.4 474.6 C983.9 459.3 984.3 449.8 985.2 436.4 C986.1 423 986.4 402.7 987 394.4 C987.6 386.1 988.7 388 989 386.7" fill="none" stroke="#000" stroke-width="1.8" stroke-linecap="round" stroke-linejoin="round"/>
<path d="M929.3 449.4 C927.4 452.9 920.4 465.4 918 470.5 C915.6 475.6 916.1 477.5 914.7 480.2 C913.4 482.9 911.4 484.8 909.9 486.6 C908.4 488.4 906.6 490.3 906 491" fill="none" stroke="#000" stroke-width="1.8" stroke-linecap="round" stroke-linejoin="round"/>
<path d="M950.3 374 C949.8 374.7 948.3 375.4 947.6 378 C946.9 380.6 947.2 386.7 946.3 389.8 C945.4 392.9 943.2 394.5 942.3 396.5 C941.4 398.5 942.1 397.3 941 401.7 C939.9 406.1 937.5 416.3 935.7 422.9 C933.9 429.5 931.4 437.6 930.4 441.4 C929.4 445.1 929.4 444.1 929.8 445.4 C930.2 446.7 930.9 447.8 933 449.4 C935.1 450.9 939 453.5 942.3 454.7 C945.6 455.9 951.1 456.3 952.9 456.6" fill="none" stroke="#000" stroke-width="1.8" stroke-linecap="round" stroke-linejoin="round"/>
<path d="M950.3 374 C950.7 374.4 949.6 375.4 952.9 376.6 C956.2 377.8 964.7 379.7 970 381 C975.3 382.3 981.4 383.1 984.7 384.6 C988 386.1 989.6 387.8 990 389.8 C990.4 391.8 987.8 395.4 987.3 396.5" fill="none" stroke="#000" stroke-width="1.8" stroke-linecap="round" stroke-linejoin="round"/>
<path d="M989 386.7 C988.5 392.2 987 407.9 986 420 C985 432.1 983.8 452.8 983.3 459.4" fill="none" stroke="#000" stroke-width="1.2" stroke-linecap="round" stroke-linejoin="round"/>
<path d="M905.8 498 C904.8 501.7 901.5 513 900 520 C898.5 527 897.5 536.7 897 540" fill="none" stroke="#555" stroke-width="0.9" stroke-linecap="round" stroke-linejoin="round"/>
<path d="M906.6 506 C907.5 508.3 910.4 515.7 912 520 C913.6 524.3 915.6 530 916.3 532" fill="none" stroke="#555" stroke-width="0.9" stroke-linecap="round" stroke-linejoin="round"/>
<path d="M941.2 343.2 C941.3 343.9 940.8 346.2 942 347.2 C943.2 348.1 946.9 347.9 948.5 348.9 C950.1 349.8 950.9 350.6 951.7 352.9 C952.5 355.2 953 359.2 953.4 362.6 C953.8 366 954.6 370.9 954.2 373.1 C953.8 375.3 951.5 375.5 951 376" fill="none" stroke="#000" stroke-width="1.8" stroke-linecap="round" stroke-linejoin="round"/>
<path d="M1001 356 C1000.7 356.3 1000.1 355.9 999.4 357.8 C998.7 359.7 998.8 364.6 997 367.5 C995.2 370.4 990.8 372.9 988.9 375.5 C987 378.1 986.2 381.8 985.7 383" fill="none" stroke="#000" stroke-width="1.8" stroke-linecap="round" stroke-linejoin="round"/>
<path d="M941 343 C944.2 343.5 951.8 344.2 960 346 C968.2 347.8 983.3 352.3 990 354 C996.7 355.7 998.3 355.7 1000 356" fill="none" stroke="#000" stroke-width="1.6" stroke-linecap="round" stroke-linejoin="round"/>
<path d="M958 322 C961.7 323.2 972.2 326.1 980 329 C987.8 331.9 999.6 336.7 1005 339.5 C1010.4 342.3 1011.4 343.5 1012.5 346 C1013.6 348.5 1013.4 352.9 1011.6 354.5 C1009.8 356.1 1003.5 355.2 1001.9 355.3" fill="none" stroke="#000" stroke-width="1.8" stroke-linecap="round" stroke-linejoin="round"/>
<path d="M936.8 333.2 C940.7 334.8 952.3 339.6 960.3 342.6 C968.3 345.6 978.1 348.9 985 351 C991.9 353.1 999.1 354.6 1001.9 355.3" fill="none" stroke="#000" stroke-width="1.6" stroke-linecap="round" stroke-linejoin="round"/>
<path d="M936.8 334.6 C940.3 336.3 950 341.9 958 345 C966 348.1 978 351.5 985 353.5 C992 355.5 997.5 356.4 1000 357" fill="none" stroke="#000" stroke-width="1.2" stroke-linecap="round" stroke-linejoin="round"/>
<path d="M1011 349.7 L1020.5 352 L1019 356.1 L1010 355" fill="none" stroke="#000" stroke-width="1.2" stroke-linecap="round" stroke-linejoin="round"/>
<path d="M945 315.6 L956.8 321.8 L948.5 336.8 L935.3 332" fill="none" stroke="#000" stroke-width="1.6" stroke-linecap="round" stroke-linejoin="round"/>
<path d="M945 315.6 L944 318 L945 319 L943 321 L943.5 322.5 L941 325 L941.5 326.5 L939 328.5 L939 330 L935.3 332" fill="none" stroke="#000" stroke-width="2.0" stroke-linecap="round" stroke-linejoin="round"/>
<path d="M957.4 323.2 C957.3 324.1 958.3 326.3 957 328.5 C955.7 330.7 950.9 334.9 949.7 336.2" fill="none" stroke="#000" stroke-width="1.2" stroke-linecap="round" stroke-linejoin="round"/>
<ellipse cx="970.3" cy="327.8" rx="6" ry="10.8" fill="#fff" stroke="#000" stroke-width="1.6" transform="rotate(-18 970.3 327.8)"/>
<ellipse cx="978.5" cy="331" rx="6" ry="11.5" fill="#fff" stroke="#000" stroke-width="1.6" transform="rotate(-18 978.5 331)"/>
<ellipse cx="989.3" cy="334.7" rx="7" ry="12.5" fill="#fff" stroke="#000" stroke-width="1.6" transform="rotate(-18 989.3 334.7)"/>
<ellipse cx="999" cy="340" rx="6.5" ry="11.5" fill="#fff" stroke="#000" stroke-width="1.6" transform="rotate(-18 999 340)"/>
<path d="M930 301.2 C932 299.6 938.1 292.7 942 291.5 C945.9 290.3 951.5 293.5 953.4 293.9" fill="none" stroke="#000" stroke-width="1.3" stroke-linecap="round" stroke-linejoin="round"/>
<path d="M934.8 305.2 C936.3 304.3 940.9 300.3 943.7 299.6 C946.5 298.9 950.4 300.9 951.7 301.2" fill="none" stroke="#000" stroke-width="1.3" stroke-linecap="round" stroke-linejoin="round"/>
<path d="M907.3 331.9 C908 333.8 908.8 340.1 911.3 343.2 C913.8 346.3 920.7 349.3 922.6 350.5" fill="none" stroke="#000" stroke-width="1.3" stroke-linecap="round" stroke-linejoin="round"/>
<path d="M915.4 333.5 C915.8 334.6 916.5 338.5 917.8 340 C919.1 341.5 922.5 342 923.4 342.4" fill="none" stroke="#000" stroke-width="1.3" stroke-linecap="round" stroke-linejoin="round"/>
<path d="M502 512.5 C504 512.4 508.8 512.1 514 512 C519.2 511.9 529.8 512 533 512" fill="none" stroke="#777" stroke-width="1.1" stroke-linecap="round" stroke-linejoin="round"/>
<path d="M565 526 C568.8 526.2 583.8 527.2 587.5 527.5" fill="none" stroke="#777" stroke-width="1.1" stroke-linecap="round" stroke-linejoin="round"/>
<path d="M497.5 586 C501.9 585.9 519.4 585.6 523.8 585.5" fill="none" stroke="#777" stroke-width="1.1" stroke-linecap="round" stroke-linejoin="round"/>
<path d="M490 592.5 C495 592.3 510.4 591.9 520 591.5 C529.6 591.1 542.9 590.2 547.5 590" fill="none" stroke="#777" stroke-width="1.1" stroke-linecap="round" stroke-linejoin="round"/>
<path d="M490 621 C494.2 621.3 510.8 622.7 515 623" fill="none" stroke="#777" stroke-width="1.1" stroke-linecap="round" stroke-linejoin="round"/>
<path d="M532.5 623.8 C537.5 623.9 557.5 624.4 562.5 624.5" fill="none" stroke="#777" stroke-width="1.1" stroke-linecap="round" stroke-linejoin="round"/>
<path d="M635 602.5 C641.7 601.5 668.3 597.3 675 596.3" fill="none" stroke="#777" stroke-width="1.1" stroke-linecap="round" stroke-linejoin="round"/>
<path d="M563.8 572.5 C566.5 571.9 577.3 569.4 580 568.8" fill="none" stroke="#777" stroke-width="1.1" stroke-linecap="round" stroke-linejoin="round"/>
<path d="M762.5 596 C764.8 596.2 773.8 596.8 776 597" fill="none" stroke="#777" stroke-width="1.1" stroke-linecap="round" stroke-linejoin="round"/>
<path d="M802.5 598.8 C809.4 599.2 836.9 600.9 843.8 601.3" fill="none" stroke="#777" stroke-width="1.1" stroke-linecap="round" stroke-linejoin="round"/>
<path d="M845 571 C849.2 570.8 865.8 570.2 870 570" fill="none" stroke="#777" stroke-width="1.1" stroke-linecap="round" stroke-linejoin="round"/>
<path d="M857 577 C858.5 577 864.5 577 866 577" fill="none" stroke="#777" stroke-width="1.1" stroke-linecap="round" stroke-linejoin="round"/>
<path d="M843.8 593.8 C846.3 594 856.3 594.8 858.8 595" fill="none" stroke="#777" stroke-width="1.1" stroke-linecap="round" stroke-linejoin="round"/>
<path d="M887 487 C889.7 486.3 900.3 483.7 903 483" fill="none" stroke="#777" stroke-width="1.1" stroke-linecap="round" stroke-linejoin="round"/>
<path d="M949 385.9 C949.6 386.1 952.2 387 952.9 387.2" fill="none" stroke="#777" stroke-width="1.1" stroke-linecap="round" stroke-linejoin="round"/>
<path d="M956.9 389.8 C957.8 390.1 961.3 391.5 962.2 391.8" fill="none" stroke="#777" stroke-width="1.1" stroke-linecap="round" stroke-linejoin="round"/>
<path d="M963.5 385.2 C967 385.6 981.2 387.4 984.7 387.9" fill="none" stroke="#777" stroke-width="1.1" stroke-linecap="round" stroke-linejoin="round"/>
<path d="M941 401.7 C942.1 402.8 946.5 407.3 947.6 408.4" fill="none" stroke="#777" stroke-width="1.1" stroke-linecap="round" stroke-linejoin="round"/>
<path d="M970.1 416.3 C972.8 415.9 983.4 414.1 986 413.7" fill="none" stroke="#777" stroke-width="1.1" stroke-linecap="round" stroke-linejoin="round"/>
<path d="M935.7 424.2 C936.4 424.6 939 426.4 939.7 426.9" fill="none" stroke="#777" stroke-width="1.1" stroke-linecap="round" stroke-linejoin="round"/>
<path d="M948.9 433.5 C949.8 433.7 953.3 434.6 954.2 434.8" fill="none" stroke="#777" stroke-width="1.1" stroke-linecap="round" stroke-linejoin="round"/>
<path d="M974 434.8 C975.8 434.4 982.9 432.6 984.7 432.2" fill="none" stroke="#777" stroke-width="1.1" stroke-linecap="round" stroke-linejoin="round"/>
<path d="M946.3 446.7 C949.6 447.1 962.8 448.9 966.1 449.4" fill="none" stroke="#777" stroke-width="1.1" stroke-linecap="round" stroke-linejoin="round"/>
<path d="M945.5 446.2 C948.9 446.7 962.3 448.9 965.7 449.4" fill="none" stroke="#777" stroke-width="1.1" stroke-linecap="round" stroke-linejoin="round"/>
<path d="M961.7 504.4 C964.4 504.4 975.1 504.4 977.8 504.4" fill="none" stroke="#777" stroke-width="1.1" stroke-linecap="round" stroke-linejoin="round"/>
<path d="M961 489 C963.8 489.5 975.2 491.5 978 492" fill="none" stroke="#777" stroke-width="1.1" stroke-linecap="round" stroke-linejoin="round"/>
<path d="M945 565 C946 562.2 950 550.8 951 548" fill="none" stroke="#777" stroke-width="1.1" stroke-linecap="round" stroke-linejoin="round"/>
<path d="M912 586 C913.3 583.3 918.7 572.7 920 570" fill="none" stroke="#777" stroke-width="1.1" stroke-linecap="round" stroke-linejoin="round"/>
<path d="M906 509 C906.7 512.8 909.3 528.2 910 532" fill="none" stroke="#777" stroke-width="1.1" stroke-linecap="round" stroke-linejoin="round"/>
<path d="M965 470 C966.7 470.3 973.3 471.7 975 472" fill="none" stroke="#777" stroke-width="1.1" stroke-linecap="round" stroke-linejoin="round"/>
</svg>
<div class="a" style="left:0;top:60px;width:67px;height:12px;background:#383838;border:1px solid #2e2e2e;border-bottom:none"></div>
<svg class="a" style="left:0;top:0" width="67" height="545" viewBox="0 0 67 545">
<g fill="#e0e0e0"><path d="M40 66 L43.5 64 V68Z M44 66 L47.5 64 V68Z"/></g>
<path d="M57.5 63.5 L62 68 M62 63.5 L57.5 68" stroke="#e8e8e8" stroke-width="1.4"/>
<g fill="#1a1a1a"><rect x="24" y="75" width="19" height="4"/></g>
<g stroke="#535353" stroke-width="1"><path d="M25.5 75V79 M27.5 75V79 M29.5 75V79 M31.5 75V79 M33.5 75V79 M35.5 75V79 M37.5 75V79 M39.5 75V79 M41.5 75V79"/></g>
<g stroke="#3a3a3a" stroke-width="1"><path d="M6 132.5 H62 M6 224.5 H62 M6 293.5 H62 M6 341.5 H62 M6 364.5 H62 M6 412.5 H62"/></g>
<g fill="#ddd">
<path d="M57 108 l3 -3 v3z M31 155 l3 -3 v3z M58 155 l3 -3 v3z M31 177 l3 -3 v3z M58 177 l3 -3 v3z M31 199 l3 -3 v3z M58 199 l3 -3 v3z M31 221 l3 -3 v3z M58 221 l3 -3 v3z M31 246 l3 -3 v3z M58 246 l3 -3 v3z M31 268 l3 -3 v3z M58 268 l3 -3 v3z M31 291 l3 -3 v3z M58 291 l3 -3 v3z M31 338 l3 -3 v3z M31 362 l3 -3 v3z M58 362 l3 -3 v3z M58 386 l3 -3 v3z M31 409 l3 -3 v3z"/>
</g>
<!-- selection -->
<path d="M15 90 V104.5 L18.5 101.5 L21 106.5 L23.5 105.5 L21.5 100.5 L25.5 100.5 Z" fill="#2a2a2a" stroke="#c8c8c8" stroke-width="1" stroke-linejoin="round"/>
<path d="M44 90 V104 L47.5 101 L50.5 106 L52.5 105 L50 100 L54 100Z" fill="#bdbdbd"/>
<!-- magic wand -->
<path d="M18 118 L28 128" stroke="#d0d0d0" stroke-width="2.2"/>
<path d="M16 111 L17 115 L21 113 L18 116.5 L22 118 L18 118.5 L19 122 L16 119 L13 122 L14 118.5 L10 118 L14 116.5 L11 113 L15 115Z" fill="#d8d8d8"/>
<!-- lasso -->
<ellipse cx="46" cy="118" rx="7" ry="4.5" fill="none" stroke="#c8c8c8" stroke-width="1.6"/>
<path d="M42 121 Q40 126 44 127" fill="none" stroke="#c8c8c8" stroke-width="1.4"/>
<path d="M47 112 L56 122 L51 122 L53 128 L50 128 L48 123 L45 126Z" fill="#c8c8c8"/>
<!-- pen -->
<g transform="translate(20 145) rotate(45)">
<path d="M-4 -5 L4 -5 L5 2 L0 11 L-5 2Z" fill="#cfcfcf"/><rect x="-4" y="-9" width="8" height="3" fill="#cfcfcf"/><circle cx="0" cy="2" r="1.4" fill="#222"/><path d="M0 3 V11" stroke="#222" stroke-width="0.8"/></g>
<g transform="translate(50 144) rotate(45)">
<path d="M-4 -5 L4 -5 L5 2 L0 11 L-5 2Z" fill="#cfcfcf"/><rect x="-4" y="-9" width="8" height="3" fill="#cfcfcf"/><circle cx="0" cy="2" r="1.4" fill="#222"/><path d="M0 3 V11" stroke="#222" stroke-width="0.8"/></g>
<path d="M40 140 Q44 136 43 143 Q41 150 40 152 Q41 155 44 153" fill="none" stroke="#cfcfcf" stroke-width="1.3"/>
<!-- type -->
<text x="13" y="174" font-family="Liberation Serif" font-size="18" fill="#d4d4d4">T</text>
<path d="M42 174 L54 161" stroke="#d8d8d8" stroke-width="1.6"/>
<!-- ellipse -->
<ellipse cx="19.5" cy="190" rx="7.5" ry="5.8" fill="#6a6a6a" stroke="#cfcfcf" stroke-width="1.2"/>
<!-- brush -->
<path d="M46 189 L56 180" stroke="#d0d0d0" stroke-width="2.4"/>
<path d="M40 196 Q41 190 45 188 L48 191 Q46 196 40 196Z" fill="#c8c8c8"/>
<!-- blob brush -->
<circle cx="17" cy="211" r="6.5" fill="#6a6a6a" stroke="#c8c8c8" stroke-width="1.1"/>
<path d="M19 219 L29 207" stroke="#d0d0d0" stroke-width="3.2"/>
<!-- eraser -->
<path d="M40 213 L48 205 L56 205 L56 210 L49 218 L40 218Z" fill="#bdbdbd"/><path d="M40 213 H49 L56 206 M49 213 V218" fill="none" stroke="#777" stroke-width="0.8"/>
<!-- rotate -->
<circle cx="20" cy="237" r="6.5" fill="none" stroke="#cfcfcf" stroke-width="1.6" stroke-dasharray="2 2"/>
<path d="M14 228 L19 231 L13 234Z" fill="#cfcfcf"/>
<!-- scale -->
<rect x="39.5" y="236.5" width="9" height="8" fill="none" stroke="#cfcfcf" stroke-width="1.1"/>
<rect x="44.5" y="230.5" width="11" height="10" fill="#5a5a5a" stroke="#cfcfcf" stroke-width="1.1"/>
<path d="M47 238 L53 233 M50 233 H53 V236" fill="none" stroke="#e0e0e0" stroke-width="1.1"/>
<!-- warp/puppet -->
<path d="M12 262 Q18 250 23 258 Q26 262 28 256 Q24 268 19 262 Q16 258 12 266Z" fill="#c4c4c4"/>
<circle cx="20" cy="261" r="2.3" fill="#333" stroke="#ddd"/><circle cx="13" cy="266" r="1.8" fill="none" stroke="#ddd"/>
<!-- free transform -->
<rect x="43.5" y="254.5" width="11" height="10" fill="none" stroke="#cfcfcf" stroke-dasharray="1.5 1.5"/>
<path d="M39 252 L49 261 L45 261 L47 266 L44 266 L42 262 L39 264Z" fill="#cfcfcf"/>
<!-- shape builder -->
<circle cx="17" cy="278" r="5.5" fill="#6a6a6a" stroke="#c8c8c8"/><circle cx="23" cy="278" r="5.5" fill="none" stroke="#c8c8c8"/>
<path d="M13 278 H20" stroke="#eee" stroke-dasharray="1 1"/>
<path d="M21 279 L30 289 L25 289 L26 292 L22 290 L21 293Z" fill="#c8c8c8"/>
<!-- perspective grid -->
<path d="M40 275 L56 281 V290 H40Z" fill="#808080" stroke="#cfcfcf"/><path d="M44 276.5 V290 M48 278 V290 M52 279.5 V290 M40 283 H56" stroke="#ddd" stroke-width="0.8"/>
<!-- mesh -->
<rect x="12.5" y="300.5" width="15" height="12" fill="#5a5a5a" stroke="#cfcfcf"/>
<path d="M13 305 Q18 302 21 306 T27 305 M13 309 Q17 307 21 310 T27 309 M17 301 Q15 306 18 312 M22 301 Q24 306 22 312" fill="none" stroke="#d0d0d0" stroke-width="0.9"/>
<!-- gradient -->
<defs><linearGradient id="gtool" x1="0" x2="1"><stop offset="0" stop-color="#333"/><stop offset="1" stop-color="#eee"/></linearGradient>
<linearGradient id="gtool2" x1="0" x2="1"><stop offset="0" stop-color="#222"/><stop offset="1" stop-color="#fff"/></linearGradient></defs>
<rect x="40.5" y="301.5" width="15" height="11" fill="url(#gtool)" stroke="#cfcfcf"/>
<!-- eyedropper -->
<path d="M13 335 L22 326" stroke="#d0d0d0" stroke-width="2.4"/><path d="M20 322 L25 318 Q28 318 28 321 L24 326Z" fill="#d0d0d0"/><path d="M19 323 L25 329" stroke="#d0d0d0" stroke-width="1.6"/>
<!-- blend -->
<rect x="39.5" y="320.5" width="8" height="8" fill="#888" stroke="#bbb"/><circle cx="47" cy="327" r="5" fill="#6a6a6a" stroke="#bbb"/><circle cx="51" cy="331" r="4.6" fill="#555" stroke="#ddd"/>
<!-- symbol sprayer -->
<rect x="15.5" y="350.5" width="10" height="10" fill="#505050" stroke="#cfcfcf" stroke-width="1.1"/><circle cx="20.5" cy="355.5" r="2" fill="none" stroke="#cfcfcf"/><rect x="18" y="346" width="5" height="4" fill="#cfcfcf"/>
<path d="M10 344 h1 M12 346 h1 M10 348 h1 M14 344 h1 M16 343 h1" stroke="#bbb"/>
<!-- graph -->
<path d="M40.5 347 V361.5 H56" fill="none" stroke="#cfcfcf"/><rect x="43" y="352" width="2" height="8" fill="#cfcfcf"/><rect x="47" y="349" width="2" height="11" fill="#cfcfcf"/><rect x="51" y="354" width="2" height="6" fill="#cfcfcf"/><rect x="54" y="351" width="2" height="9" fill="#cfcfcf"/>
<!-- artboard -->
<rect x="15.5" y="372.5" width="11" height="10" fill="#6e6e6e" stroke="#cfcfcf"/><path d="M11 372.5 H14 M28 372.5 H31 M11 382.5 H14 M28 382.5 H31 M15.5 368 V371 M26.5 368 V371 M15.5 384 V387 M26.5 384 V387" stroke="#cfcfcf" stroke-width="1"/>
<!-- slice -->
<path d="M41 384 L54 371 Q57 370 56 373 L46 383Z" fill="#cfcfcf"/><path d="M41 384 L46 379" stroke="#555"/>
<!-- hand -->
<path d="M14 398 V393 Q15 391 16 393 V397 V390 Q17 388 18 390 V396 V389 Q19 387 20.5 389 V396 V391 Q22 389 23 391 V399 L25 396 Q27 395 27 397 L23 405 Q21 408 18 408 H16 Q13 406 13 402Z" fill="#d0d0d0"/>
<!-- zoom selected -->
<rect x="36" y="389" width="25" height="22" fill="#3a3a3a" stroke="#2c2c2c"/>
<circle cx="46" cy="398" r="4.5" fill="none" stroke="#d0d0d0" stroke-width="1.8"/><path d="M49.5 401.5 L54 406" stroke="#d0d0d0" stroke-width="2.5"/>
<!-- fill/stroke -->
<rect x="5.5" y="415.5" width="33" height="32" fill="#fff" stroke="#888"/>
<path d="M6 447 L38 416" stroke="#e82020" stroke-width="2"/>
<rect x="23" y="432" width="33" height="33" fill="#000" stroke="#e8e8e8" stroke-width="1.4"/>
<rect x="31.5" y="440.5" width="16" height="16" fill="#454545" stroke="#cfcfcf" stroke-width="1.1"/>
<path d="M47 419 Q52 417 53 422 M51 420 L53 423 L55 420 M49 423 h0" fill="none" stroke="#d0d0d0" stroke-width="1.1"/>
<path d="M47.5 418 L50 416.5 V419.5Z" fill="#d0d0d0"/>
<rect x="6.5" y="454.5" width="7" height="7" fill="#eee"/><rect x="9.5" y="457.5" width="7" height="7" fill="#111" stroke="#ddd"/>
<!-- color mode row -->
<rect x="7.5" y="472.5" width="53" height="15" fill="#3a3a3a" stroke="#2e2e2e"/>
<rect x="8" y="473" width="17" height="14" fill="#2a2a2a"/>
<rect x="11.5" y="475.5" width="9" height="9" fill="#000" stroke="#444"/>
<rect x="29.5" y="475.5" width="10" height="10" fill="url(#gtool2)" stroke="#ddd"/>
<rect x="46.5" y="475.5" width="10" height="10" fill="#fff" stroke="#ddd"/><path d="M47 485 L56 476" stroke="#e02020" stroke-width="1.8"/>
<!-- draw modes -->
<rect x="7.5" y="495.5" width="53" height="15" fill="#454545" stroke="#333"/>
<rect x="8" y="496" width="17" height="14" fill="#333"/>
<rect x="26" y="496" width="17" height="14" fill="#5a5a5a"/>
<circle cx="15" cy="502" r="3.5" fill="none" stroke="#ccc" stroke-width="1.1"/><rect x="14.5" y="502.5" width="5" height="5" fill="#888" stroke="#ccc"/>
<circle cx="33" cy="502" r="3.5" fill="none" stroke="#ccc" stroke-width="1.1"/><rect x="33.5" y="502.5" width="5" height="5" fill="#666" stroke="#aaa"/>
<circle cx="51" cy="503" r="3.5" fill="none" stroke="#777" stroke-width="1.1"/>
<!-- screen mode -->
<rect x="22.5" y="524.5" width="12" height="9" fill="#888" stroke="#ccc"/><rect x="28.5" y="520.5" width="13" height="10" fill="#999" stroke="#ddd"/>
</svg>
<div class="a" style="left:1244px;top:60px;width:36px;height:12px;background:#383838"></div>
<div class="a" style="left:1244px;top:72px;width:36px;height:89px;background:#535353;border-top:1px solid #2e2e2e"></div>
<div class="a" style="left:1244px;top:163px;width:36px;height:89px;background:#535353;border-top:1px solid #2e2e2e"></div>
<div class="a" style="left:1244px;top:254px;width:36px;height:91px;background:#535353;border-top:1px solid #2e2e2e"></div>
<div class="a" style="left:1244px;top:347px;width:36px;height:59px;background:#535353;border-top:1px solid #2e2e2e"></div>
<div class="a" style="left:1244px;top:408px;width:36px;height:65px;background:#535353;border-top:1px solid #2e2e2e;border-bottom:1px solid #2e2e2e"></div>
<svg class="a" style="left:1242px;top:0" width="38" height="680" viewBox="1242 0 38 680">
<defs><linearGradient id="gd1" x1="0" y1="1" x2="1" y2="0"><stop offset="0" stop-color="#222"/><stop offset="1" stop-color="#eee"/></linearGradient>
<linearGradient id="gd2" x1="0" x2="1"><stop offset="0" stop-color="#222"/><stop offset="1" stop-color="#ddd"/></linearGradient></defs>
<path d="M1266 66 L1269.5 64 V68Z M1270 66 L1273.5 64 V68Z" fill="#e0e0e0"/>
<g stroke="#1a1a1a" stroke-width="1"><path d="M1253.5 75V79 M1255.5 75V79 M1257.5 75V79 M1259.5 75V79 M1261.5 75V79 M1263.5 75V79 M1265.5 75V79 M1267.5 75V79 M1269.5 75V79
M1253.5 166V170 M1255.5 166V170 M1257.5 166V170 M1259.5 166V170 M1261.5 166V170 M1263.5 166V170 M1265.5 166V170 M1267.5 166V170 M1269.5 166V170
M1253.5 257V261 M1255.5 257V261 M1257.5 257V261 M1259.5 257V261 M1261.5 257V261 M1263.5 257V261 M1265.5 257V261 M1267.5 257V261 M1269.5 257V261
M1253.5 350V354 M1255.5 350V354 M1257.5 350V354 M1259.5 350V354 M1261.5 350V354 M1263.5 350V354 M1265.5 350V354 M1267.5 350V354 M1269.5 350V354
M1253.5 411V415 M1255.5 411V415 M1257.5 411V415 M1259.5 411V415 M1261.5 411V415 M1263.5 411V415 M1265.5 411V415 M1267.5 411V415 M1269.5 411V415"/></g>
<!-- palette -->
<path d="M1262 87 Q1272 86 1273 92 Q1273 97 1268 96 Q1265 96 1266 99 Q1266 102 1261 102 Q1253 101 1253 95 Q1253 88 1262 87Z" fill="#c8c8c8"/>
<circle cx="1257" cy="94" r="1.4" fill="#444"/><circle cx="1260" cy="98" r="1.3" fill="#444"/><circle cx="1264" cy="97.5" r="1.3" fill="#444"/><circle cx="1266" cy="91" r="1.3" fill="#444"/><circle cx="1270" cy="92" r="1.3" fill="#444"/>
<!-- guide/gradient quarter -->
<path d="M1255 111 Q1269 112 1270 126 H1255Z" fill="url(#gd1)" stroke="#ddd" stroke-width="1"/>
<!-- color guide -->
<circle cx="1259" cy="145" r="5" fill="none" stroke="#ccc" stroke-width="1.5"/><circle cx="1259" cy="145" r="1.8" fill="#ccc"/>
<path d="M1259 145 L1269 138 M1259 145 L1269 153" stroke="#ccc" stroke-width="1.3"/><circle cx="1269" cy="138" r="2" fill="#ccc"/><circle cx="1269" cy="153" r="2" fill="#ccc"/>
<!-- swatches -->
<rect x="1254.5" y="180.5" width="16" height="10" fill="#333" stroke="#ccc"/>
<path d="M1254.5 185.5 H1270.5 M1259.5 180.5 V190.5 M1264.5 180.5 V190.5" stroke="#ccc"/>
<rect x="1256" y="182" width="3" height="3" fill="#ccc"/><rect x="1261" y="187" width="3" height="3" fill="#ccc"/>
<!-- brushes -->
<rect x="1258" y="211" width="9" height="9" fill="#ccc"/><path d="M1259 211 L1256 203 M1262 211 L1262 202 M1265 211 L1268 204" stroke="#ccc" stroke-width="1.6"/><circle cx="1256" cy="203" r="1.6" fill="#ccc"/><circle cx="1268" cy="204" r="1.6" fill="#ccc"/>
<!-- club -->
<circle cx="1262" cy="231" r="3.6" fill="#ccc"/><circle cx="1258" cy="237" r="3.6" fill="#ccc"/><circle cx="1266" cy="237" r="3.6" fill="#ccc"/><path d="M1262 236 L1264 244 H1260Z" fill="#ccc"/>
<!-- stroke -->
<path d="M1254 270 H1271 M1254 274.5 H1271 M1254 279 H1271" stroke="#ccc" stroke-width="1.6"/>
<!-- gradient -->
<rect x="1255.5" y="295.5" width="15" height="11" fill="url(#gd2)" stroke="#ccc"/>
<!-- transparency -->
<circle cx="1260" cy="325" r="5.5" fill="#bbb"/><circle cx="1265" cy="329" r="5.5" fill="#666" stroke="#ccc" stroke-width="1.2"/>
<!-- appearance -->
<circle cx="1262" cy="366" r="6.5" fill="#bbb" stroke="#eee" stroke-width="1.2" stroke-dasharray="1.6 1.2"/>
<circle cx="1262" cy="366" r="4.8" fill="#bbb"/>
<!-- transform -->
<rect x="1259.5" y="385.5" width="11" height="10" fill="none" stroke="#ccc" stroke-width="1.1"/><rect x="1254.5" y="391.5" width="7" height="7" fill="#555" stroke="#ccc"/><path d="M1256 397 h4" stroke="#ccc"/>
<!-- layers selected -->
<rect x="1248" y="420" width="28" height="23" fill="#2e2e2e"/>
<path d="M1262 424 L1270 429 L1262 434 L1254 429Z" fill="#e0e0e0"/>
<path d="M1256 431.5 L1254 433 L1262 438 L1270 433 L1268 431.5 L1262 435Z" fill="#e0e0e0"/>
<!-- artboards -->
<rect x="1254.5" y="449.5" width="10" height="9" fill="none" stroke="#ccc" stroke-width="1.1"/><rect x="1259.5" y="454.5" width="11" height="9" fill="#535353" stroke="#ccc" stroke-width="1.1"/>
</svg>
<div class="a" style="left:1009px;top:407px;width:234px;height:195px;background:#535353;border:1px solid #2a2a2a;border-top-color:#222">
  <div class="a" style="left:0;top:0;width:232px;height:18px;background:#3a3a3a"></div>
  <div class="a" style="left:0;top:0;width:40px;height:18px;background:#535353"></div>
  <div class="a" style="left:40px;top:0;width:86px;height:18px;background:#424242;border-right:1px solid #2e2e2e"></div>
  <div class="lbl" style="left:7px;top:4px;color:#ececec;font-weight:bold;letter-spacing:-0.3px">Capas</div>
  <div class="lbl" style="left:46px;top:4px;color:#9a9a9a;font-weight:bold;letter-spacing:-0.45px">Mesas de trabajo</div>
  <svg class="a" style="left:194px;top:5px" width="36" height="10" viewBox="0 0 36 10"><path d="M1 1 L5 4.5 L1 8Z M6 1 L10 4.5 L6 8Z" fill="#e0e0e0"/><path d="M16.5 0 V10 M18.5 0 V10" stroke="#2a2a2a"/><path d="M21 3 h4 l-2 2.5z" fill="#ddd"/><path d="M26 1.5 H33 M26 4.5 H33 M26 7.5 H33" stroke="#ddd"/></svg>
  <div class="a" style="left:5px;top:25px;width:224px;height:144px;background:#4a4a4a;border:1px solid #2e2e2e"></div>
  <div class="a" style="left:6px;top:26px;width:222px;height:18px;background:#5c6575"></div>
  <div class="a" style="left:6px;top:44px;width:222px;height:1px;background:#333"></div>
  <div class="a" style="left:6px;top:64px;width:222px;height:1px;background:#333"></div>
  <div class="a" style="left:6px;top:83px;width:222px;height:1px;background:#333"></div>
  <div class="a" style="left:6px;top:103px;width:222px;height:1px;background:#333"></div>
  <div class="a" style="left:25px;top:26px;width:1px;height:77px;background:#333"></div>
  <div class="a" style="left:45px;top:26px;width:1px;height:77px;background:#333"></div>
  <div class="a" style="left:194px;top:26px;width:1px;height:77px;background:#333"></div>
  <div class="a" style="left:47px;top:27px;width:4px;height:17px;background:#4747d8"></div>
  <div class="a" style="left:47px;top:46px;width:4px;height:17px;background:#d63ed6"></div>
  <div class="a" style="left:47px;top:65px;width:4px;height:17px;background:#e04545"></div>
  <div class="a" style="left:47px;top:85px;width:4px;height:17px;background:#4a72e6"></div>
  <div class="a" style="left:72px;top:27px;width:16px;height:16px;background:#fafafa"></div>
  <div class="a" style="left:72px;top:46px;width:16px;height:17px;background:#fafafa;border:1.5px solid #111"></div>
  <div class="a" style="left:72px;top:65px;width:16px;height:17px;background:#e8e8e8;border:1.5px solid #111;overflow:hidden">
    <svg width="14" height="14" viewBox="0 0 14 14"><path d="M2 3 Q5 0 9 2 L10 6 L6 8 L3 7Z M1 9 L5 13 M8 9 L12 13 M4 4 l1 1 M8 4 l1 1" fill="none" stroke="#111" stroke-width="1.1"/></svg></div>
  <div class="a" style="left:72px;top:85px;width:16px;height:17px;background:linear-gradient(135deg,#ddd,#999);border:1.5px solid #111"></div>
  <div class="lbl" style="left:93px;top:30px;color:#f0f0f0;letter-spacing:-0.2px">color</div>
  <div class="lbl" style="left:93px;top:49px;color:#f0f0f0;letter-spacing:-0.2px">extras</div>
  <div class="lbl" style="left:93px;top:68px;color:#f0f0f0;letter-spacing:-0.5px">Trazos</div>
  <div class="lbl" style="left:93px;top:88px;color:#f0f0f0;letter-spacing:-0.2px">base</div>
  <svg class="a" style="left:0;top:0" width="234" height="195" viewBox="0 0 234 195">
    <g fill="#cfcfcf"><path d="M8 35 Q15 28 22 35 Q15 42 8 35Z"/><path d="M8 74 Q15 67 22 74 Q15 81 8 74Z"/></g>
    <circle cx="15" cy="35" r="2.5" fill="#333"/><circle cx="15" cy="74" r="2.5" fill="#333"/>
    <g fill="#cfcfcf"><rect x="31" y="54" width="9" height="7"/><rect x="31" y="73" width="9" height="7"/><rect x="31" y="93" width="9" height="7"/></g>
    <g fill="none" stroke="#cfcfcf" stroke-width="1.4"><path d="M33 54 V52 Q35.5 48.5 38 52 V54"/><path d="M33 73 V71 Q35.5 67.5 38 71 V73"/><path d="M33 93 V91 Q35.5 87.5 38 91 V93"/></g>
    <g fill="#e8e8e8"><path d="M56 50 L62 54.5 L56 59Z"/><path d="M56 69 L62 73.5 L56 78Z"/><path d="M56 89 L62 93.5 L56 98Z"/></g>
    <g fill="none" stroke="#d0d0d0" stroke-width="1.1"><circle cx="205" cy="35" r="4"/><circle cx="205" cy="55" r="4"/><circle cx="205" cy="74" r="4"/><circle cx="205" cy="94" r="4"/></g>
    <path d="M223 27 H228 V32Z" fill="#e8e8e8"/>
    <g fill="none" stroke="#777" stroke-width="1.3"><circle cx="109" cy="176" r="4"/><path d="M106 179 L102 183"/></g>
    <g fill="#6e6e6e"><rect x="124" y="172" width="8" height="9"/></g>
    <g fill="#d8d8d8"><path d="M149 173 H159 V184 H155 V178 H149Z"/><path d="M146 172 L150 172 L148 176Z"/><path d="M173 172 H184 V184 H177 V181 H173Z"/><path d="M196 174 H208 V176 H196Z M198 177 H206 L205 185 H199Z"/></g>
    <g fill="#222"><rect x="222" y="185" width="1.5" height="1.5"/><rect x="225" y="185" width="1.5" height="1.5"/><rect x="228" y="185" width="1.5" height="1.5"/><rect x="225" y="182" width="1.5" height="1.5"/><rect x="228" y="182" width="1.5" height="1.5"/><rect x="228" y="179" width="1.5" height="1.5"/></g>
  </svg>
  <div class="lbl" style="left:5px;top:173px;color:#eaeaea;font-weight:bold;letter-spacing:-0.4px">4 capas</div>
  <div class="a" style="left:0;top:187px;width:232px;height:6px;background:#484848;border-top:1px solid #2e2e2e"></div>
  <div class="a" style="left:107px;top:189px;width:19px;height:3px;background:repeating-linear-gradient(90deg,#1a1a1a 0 1px,#484848 1px 2px)"></div>
</div>
</body></html>
